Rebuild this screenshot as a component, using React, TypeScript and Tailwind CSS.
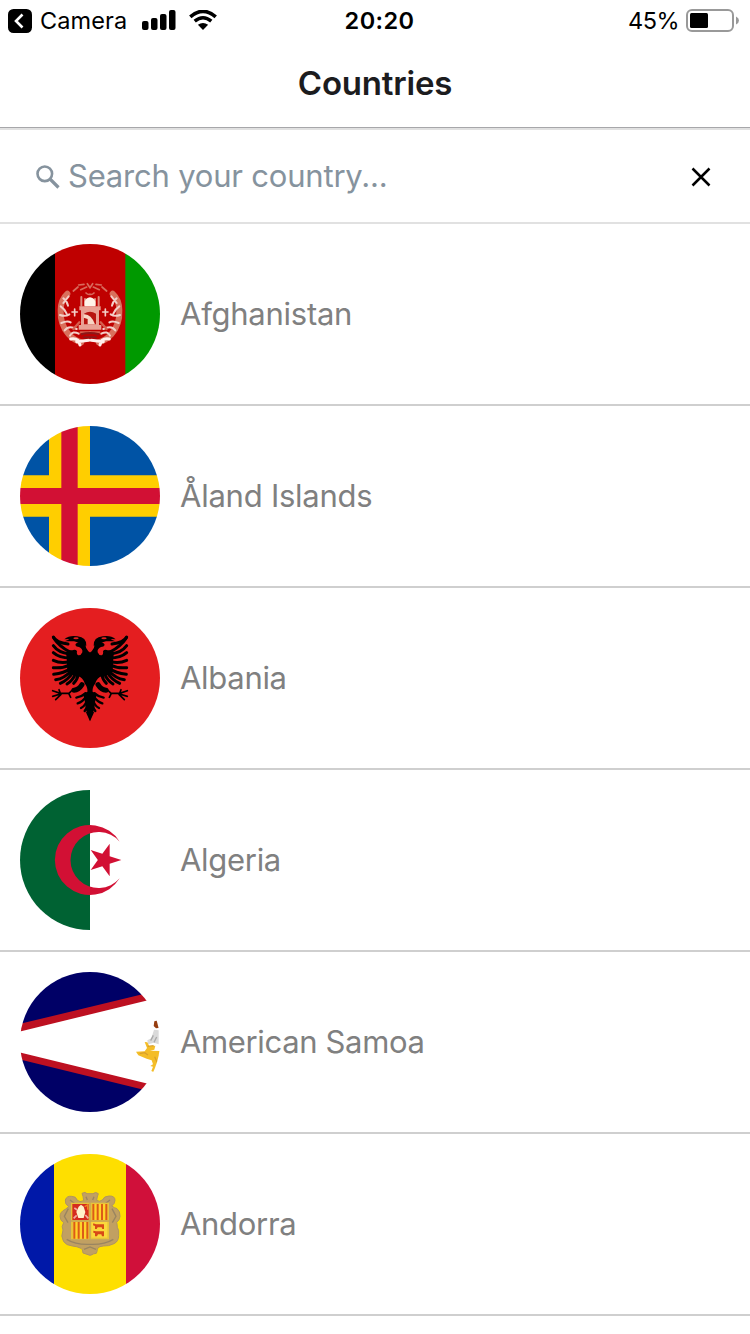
import type { ReactNode } from "react";

type FlagProps = { id: string; dy?: number; children: ReactNode };

/* Round 140px flag; artwork is drawn on a 3x grid with a 30 unit left margin. */
function Flag({ id, dy = 30, children }: FlagProps) {
  return (
    <svg viewBox={`30 ${dy} 420 420`} className="h-[140px] w-[140px] shrink-0" aria-hidden="true">
      <defs>
        <clipPath id={id}>
          <circle cx="240" cy={dy + 210} r="210" />
        </clipPath>
        <filter id={`${id}-soft`} x="-5%" y="-5%" width="110%" height="110%" colorInterpolationFilters="sRGB">
          <feGaussianBlur stdDeviation="1.7" />
        </filter>
      </defs>
      <g clipPath={`url(#${id})`}>
        <g filter={`url(#${id}-soft)`}>{children}</g>
      </g>
    </svg>
  );
}

function Afghanistan() {
  const half = (
    <g fill="none" stroke="#f3cfc8" strokeLinecap="round">
      <path d="M172 176 Q152 194 152 226 Q150 268 176 298 Q192 316 214 322" stroke="#d9705c" strokeWidth="18" />
      <path d="M160 190 Q172 200 174 212 M152 214 Q164 222 170 236 M150 240 Q166 246 178 238 M154 264 Q172 256 182 262 M164 286 Q176 270 200 282 M180 302 Q188 286 206 296 M160 204 L176 184" strokeWidth="6" />
      <path d="M182 312 Q206 308 210 330 M200 320 L236 316" stroke="#fff0ec" strokeWidth="9" />
      <path d="M190 168 L204 156 M206 150 L222 148 M212 164 L230 156 M228 174 Q234 180 240 178 M232 146 L240 158" stroke="#d86a5c" strokeWidth="5" />
      <path d="M214 186 V212 M225 192 V210" stroke="#dd8a7c" strokeWidth="6" />
      <path d="M194 222 V242 M186 231 H202" strokeWidth="5" />
      <path d="M208 262 L190 282 M212 292 H240" stroke="#d6604f" strokeWidth="7" />
    </g>
  );
  return (
    <Flag id="af" dy={27}>
      <path fill="#bf0000" d="M125 20h231v434H125z" />
      <path fill="#000" d="M20 20h115v434H20z" />
      <path fill="#090" d="M346 20h114v434H346z" />
      {half}
      <g transform="matrix(-1 0 0 1 480 0)">{half}</g>
      <path fill="#e9a194" d="M208 214h64v12h-5v44h7v14h-68v-14h7v-44h-5z" />
      <path fill="#fff3e9" d="M224 214v-14q4-12 16-13q12 1 16 13v14z" />
      <path fill="#b81510" d="M222 236q18-12 36 0v32h-36z" />
      <path fill="#f7d5c4" d="M221 238q22-2 34 30h-22v-16l-12-4z" />
      <path d="M213 298q27-8 54 0M220 307h40" fill="none" stroke="#8d1717" strokeWidth="6" />
    </Flag>
  );
}

function Aland() {
  return (
    <Flag id="ax" dy={18}>
      <path fill="#0053a5" d="M20 8h440v440H20z" />
      <path fill="#ffce00" d="M117 8h123v158h220v124H240v158H117V290H20V166h97z" />
      <path fill="#d21034" d="M154 8h49v196h257v48H203v196h-49V252H20v-48h134z" />
    </Flag>
  );
}

function Albania() {
  const half = (
    <g>
      <path d="M241 158 L235 154 Q227 146 226 134 Q222 124 210 126 Q198 127 196 135 Q198 141 207 141 Q219 146 217 157 Q213 167 205 166 Q199 163 201 153 Q195 147 187 151 L176 151 Q166 158 170 172 L172 214 Q182 226 204 229 Q218 232 224 250 Q234 264 232 276 Q214 278 222 292 Q226 306 227 328 L241 362z" />
      <path d="M163 118 Q178 105 202 109 Q230 112 229 137 L214 135 Q206 126 192 124 L164 124 Q176 120 178 117z" />
      <ellipse cx="198" cy="115" rx="8" ry="3" fill="#e41e20" />
      <g fill="none" stroke="#000" strokeLinecap="round" strokeWidth="9">
        <path d="M130 111 Q138 128 174 132" />
        <path d="M131 113 Q146 138 180 156 M130 137 Q145 158 178 162" />
        <path d="M130 158 Q148 174 180 174 M130 181 Q154 192 180 184" />
        <path d="M130 203 Q158 206 182 194 M131 223 Q162 220 184 204" />
        <path d="M137 239 Q162 236 184 212 M151 250 Q172 242 190 216" />
        <path d="M171 252 Q188 242 196 222 M191 250 Q202 240 204 224" />
        <path d="M216 254 Q206 270 192 271" strokeWidth="15" />
        <path d="M187 270 L177 280 H151 L128 272 M151 282 L128 289 M153 283 L137 299 M176 280 L182 292 M151 280 L147 269" strokeWidth="5" />
        <path d="M226 280 Q214 291 199 293 M228 290 Q218 306 203 310 M231 300 Q226 318 213 324 M234 318 L224 333" strokeWidth="7" />
      </g>
      <path d="M240 364 L227 335 L240 340z" />
    </g>
  );
  return (
    <Flag id="al" dy={24}>
      <path fill="#e41e20" d="M20 14h440v440H20z" />
      {half}
      <g transform="matrix(-1 0 0 1 480 0)">{half}</g>
    </Flag>
  );
}

function Algeria() {
  return (
    <Flag id="dz">
      <path fill="#fff" d="M20 20h440v440H20z" />
      <path fill="#006233" d="M20 20h220v440H20z" />
      <path fill="#d21034" d="M329 185A105 105 0 1 0 329 295A84 84 0 1 1 329 185z" />
      <path fill="#d21034" d="M334 240L299 251.500L299 288.500L277 258.500L242 270L263.500 240L242 210L277 221.500L299 191.500L299 228.500z" />
    </Flag>
  );
}

function AmericanSamoa() {
  return (
    <Flag id="as">
      <path fill="#006" d="M20 20h440v440H20z" />
      <path fill="#bd1021" d="M20 188L460 82v316L20 290z" />
      <path fill="#fff" d="M0 216L408 116h60v248h-60L0 264z" />
      <path fill="#963d10" d="M433 178l12-3 6 22-13 2-7-7z" />
      <path fill="#dadada" d="M432 203l14 2v42l-14-5-18 5-2-12 12-6z" />
      <path d="M422 236l8-16m2 21l8-16" stroke="#aaa" strokeWidth="4" fill="none" />
      <path fill="#f4bd27" d="M404 240l8 1 6 12 18-2-3 12-13 3 30 1v40l-18 24-8-4 5-13-8-2 8-5-4-12-15-5-25-10-7-11 26-1 7-10z" />
      <path d="M389 275l15-3 10 7M413 253l18-2M434 284l7 16" stroke="#d9a02a" strokeWidth="4" fill="none" />
    </Flag>
  );
}

function Andorra() {
  return (
    <Flag id="ad">
      <path fill="#fedf00" d="M122 20h236v440H122z" />
      <path fill="#0018a8" d="M20 20h112v440H20z" />
      <path fill="#d0103a" d="M348 20h112v440H348z" />
      <path
        fill="#c1a062"
        stroke="#b0965e"
        strokeWidth="3"
        d="M216 148q10-6 15 1h18q8-7 16 0q-4 10-5 20q8 6 17-1q5-12 20-12q18-1 18 13q0 10-10 17q9 6 16 8q10 8 9 23q-1 12-10 18q2 8 2 15q6 8 4 25q0 17-14 24q-16 8-32 7q-12 0-18 8q0 8-3 14q-10 1-13 4q-6 4-12 0l-15-5q-1-12-6-14q-12-6-26-7q-18-2-26-13q-10-16-2-35q-6-10 2-22q-10-6-11-18q0-15 16-22l10-8q-12-8-10-20q4-13 19-11q14 0 16 11q8 9 20 2q-1-13-5-22z"
      />
      <path d="M170 286q28 17 70 15q42 2 70-15M175 194l-12 23 11 19M306 194l12 23-11 19M180 168l13 10M300 168l-13 10M228 158l4 10M252 158l-4 10M222 316l18-7 18 7" fill="none" stroke="#9a8560" strokeWidth="4" />
      <path fill="#e8c33a" d="M183 176h114v110H183z" />
      <path fill="#d52b1e" d="M187 180h49v48h-49z" />
      <path fill="#ffd32b" d="M246 180h46v48h-46zM189 234h47v50h-47z" />
      <path fill="#fbd83c" d="M244 234h48v47h-48z" />
      <path d="M250 180v48m13-48v48m13-48v48m13-48v48M193 234v50m13-50v50m13-50v50m13-50v50" stroke="#dc5b18" strokeWidth="6" />
      <path fill="#fff1ca" d="M206 188l7-6 8 6 5 16-5 18h-16l-6-18z" />
      <path d="M191 223l9-9m26-1l9 10M193 192l9 6" stroke="#f2aaa0" strokeWidth="5" />
      <path d="M224 188l9-5v14" stroke="#ef8a22" strokeWidth="4" fill="none" />
      <path fill="#d84a17" d="M250 238l8 3h24v14h-5l-2-5h-12l-3 5h-5v-9l-6-2zM250 260l8 2h24v15h-6l-2-6h-10l-3 6h-6v-9l-5-2z" />
      <path d="M183 231h114M240 176v110" stroke="#c7a557" strokeWidth="4" />
    </Flag>
  );
}

const countries = [
  { name: "Afghanistan", flag: <Afghanistan />, spacing: "tracking-[-0.25px]" },
  { name: "Åland Islands", flag: <Aland />, spacing: "tracking-[-0.24px]" },
  { name: "Albania", flag: <Albania />, spacing: "tracking-[-0.3px]" },
  { name: "Algeria", flag: <Algeria />, spacing: "tracking-[-0.3px]" },
  { name: "American Samoa", flag: <AmericanSamoa />, spacing: "tracking-[-0.35px]" },
  { name: "Andorra", flag: <Andorra />, spacing: "tracking-[-0.3px]" },
];

function StatusBar() {
  return (
    <div className="grid h-10 grid-cols-3 items-center pl-2 pr-[11px] pt-px text-[23.5px] leading-10 text-black">
      <div className="flex items-center">
        <svg viewBox="0 0 24 24" className="h-6 w-6">
          <rect width="24" height="24" rx="5.5" />
          <path d="M14.5 5.5L8 12l6.500 6.500" fill="none" stroke="#fff" strokeWidth="2.600" />
        </svg>
        <span className="ml-2 tracking-[0.1px]">Camera</span>
        <svg viewBox="0 0 34 20" className="-mt-0.5 ml-[15px] h-5 w-[34px]">
          <rect y="11" width="6.500" height="9" rx="2" />
          <rect x="9" y="8" width="6.500" height="12" rx="2" />
          <rect x="18" y="4" width="6.500" height="16" rx="2" />
          <rect x="27" y="0" width="6.500" height="20" rx="2" />
        </svg>
        <svg viewBox="0 0 28 20" className="-mt-0.5 ml-[13px] h-5 w-7" fill="none" stroke="#000">
          <path d="M1.300 6.800Q14-4 26.700 6.800" strokeWidth="3.700" />
          <path d="M5.700 11.200Q14 4.300 22.300 11.200" strokeWidth="3.500" />
          <path d="M14 20L8.900 14.800Q14 11.300 19.100 14.800z" fill="#000" stroke="none" />
        </svg>
      </div>
      <div className="pl-3 text-center font-semibold tracking-[0.4px]">20:20</div>
      <div className="flex items-center justify-end">
        <span className="tracking-[-0.5px]">45%</span>
        <svg viewBox="0 0 53 23" className="-mt-px ml-[7px] h-[23px] w-[53px]">
          <rect x="1" y="1" width="46" height="21" rx="5" fill="none" stroke="#999" strokeWidth="2" />
          <rect x="4" y="4" width="18" height="15" rx="1.500" />
          <path d="M50 7.500q3 1.500 3 4t-3 4z" fill="#999" />
        </svg>
      </div>
    </div>
  );
}

export default function App() {
  return (
    <div className="flex h-[1334px] w-[750px] flex-col overflow-hidden bg-white font-['Inter',sans-serif]">
      <StatusBar />
      <header className="flex h-[88px] items-center justify-center border-b border-[#a7a7aa]">
        <h1 className="text-[33px] font-semibold tracking-[-0.2px] text-[#1c1c1e]">Countries</h1>
      </header>
      <div className="flex h-24 items-center border-y-2 border-[#e1e1e1] pl-9 pr-[39px]">
        <svg viewBox="0 0 24 24" className="mt-0.5 h-6 w-6" fill="none" stroke="#86939e">
          <circle cx="8.800" cy="8.800" r="7.300" strokeWidth="2.600" />
          <path d="M14 14l8.500 8.500" strokeWidth="3.200" />
        </svg>
        <span className="ml-2 grow text-[31px] tracking-[-0.2px] text-[#86939e]">Search your country...</span>
        <svg viewBox="0 0 20 20" className="mt-0.5 h-5 w-5" fill="none" stroke="#000" strokeWidth="2.500">
          <path d="M1.500 1.500l17 17m0-17l-17 17" />
        </svg>
      </div>
      <ul>
        {countries.map((c) => (
          <li key={c.name} className="flex h-[182px] items-center gap-5 border-b-2 border-[#cfcfcf] pl-5">
            {c.flag}
            <span className={`text-[31px] text-[#808080] ${c.spacing}`}>{c.name}</span>
          </li>
        ))}
      </ul>
    </div>
  );
}
